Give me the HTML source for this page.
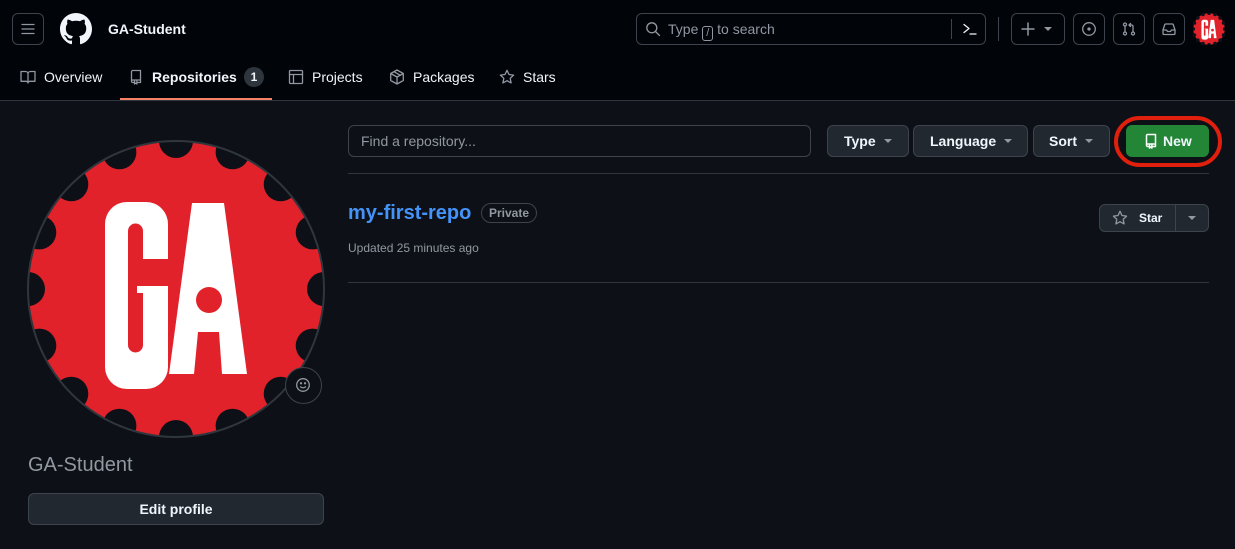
<!DOCTYPE html>
<html><head><meta charset="utf-8"><style>
*{box-sizing:border-box;margin:0;padding:0}
body{width:1235px;height:549px;overflow:hidden;background:#0d1117;font-family:"Liberation Sans",sans-serif;color:#f0f6fc;position:relative}
.abs{position:absolute}
.hdr{left:0;top:0;width:1235px;height:101px;background:#010409;border-bottom:1px solid #30363d}
.btn{position:absolute;border:1px solid #3d444d;border-radius:6px}
.ic{position:absolute;fill:none;stroke:#9198a1;stroke-width:1.3;stroke-linecap:round;stroke-linejoin:round}
.tab{position:absolute;top:68px;font-size:14px;color:#f0f6fc;line-height:18px}
.gbtn{position:absolute;top:125px;height:32px;background:#212830;border:1px solid #3d444d;border-radius:6px;font-size:14px;font-weight:bold;color:#f0f6fc;line-height:30px}
.caret{display:inline-block;width:0;height:0;border-left:4px solid transparent;border-right:4px solid transparent;border-top:4px solid #9198a1;vertical-align:middle;margin-left:8px;margin-top:-2px}
</style></head><body>
<div class="abs hdr"></div>
<div class="btn" style="left:12px;top:13px;width:32px;height:32px"></div>
<svg class="ic" style="left:20px;top:21px" width="16" height="16" viewBox="0 0 16 16"><path d="M2 3.5h12M2 8h12M2 12.5h12"/></svg>
<svg class="abs" style="left:60px;top:13px" width="32" height="32" viewBox="0 0 16 16"><path fill="#f0f6fc" d="M8 0C3.58 0 0 3.58 0 8c0 3.54 2.29 6.53 5.47 7.59.4.07.55-.17.55-.38 0-.19-.01-.82-.01-1.49-2.01.37-2.53-.49-2.69-.94-.09-.23-.48-.94-.82-1.13-.28-.15-.68-.52-.01-.53.63-.01 1.08.58 1.23.82.72 1.21 1.87.87 2.33.66.07-.52.28-.87.51-1.07-1.78-.2-3.64-.89-3.64-3.95 0-.87.31-1.59.82-2.15-.08-.2-.36-1.02.08-2.12 0 0 .67-.21 2.2.82.64-.18 1.32-.27 2-.27.68 0 1.36.09 2 .27 1.53-1.04 2.2-.82 2.2-.82.44 1.1.16 1.92.08 2.12.51.56.82 1.27.82 2.15 0 3.07-1.87 3.75-3.65 3.95.29.25.54.73.54 1.48 0 1.07-.01 1.93-.01 2.2 0 .21.15.46.55.38A8.013 8.013 0 0016 8c0-4.42-3.58-8-8-8z"/></svg>
<div class="abs" style="left:108px;top:20px;font-size:14px;font-weight:bold;line-height:18px">GA-Student</div>
<div class="btn" style="left:636px;top:13px;width:350px;height:32px"></div>
<svg class="ic" style="left:645px;top:21px" width="16" height="16" viewBox="0 0 16 16"><circle cx="6.8" cy="6.8" r="5"/><path d="M10.5 10.5l4 4"/></svg>
<div class="abs" style="left:668px;top:20px;font-size:14px;color:#9198a1;line-height:18px">Type <span style="display:inline-block;border:1px solid #9198a1;border-radius:3px;width:11px;height:15px;font-size:11px;line-height:13px;text-align:center;vertical-align:-2px">/</span> to search</div>
<div class="abs" style="left:951px;top:19px;width:1px;height:20px;background:#3d444d"></div>
<svg class="ic" style="left:962px;top:21px;stroke:#f0f6fc" width="16" height="16" viewBox="0 0 16 16"><path d="M2 3.5l5 4-5 4M8 13h6"/></svg>
<div class="abs" style="left:998px;top:17px;width:1px;height:24px;background:#3d444d"></div>
<div class="btn" style="left:1011px;top:13px;width:54px;height:32px"></div>
<svg class="ic" style="left:1020px;top:21px;stroke:#9198a1;stroke-width:1.5" width="16" height="16" viewBox="0 0 16 16"><path d="M8 2v12M2 8h12"/></svg>
<div class="abs" style="left:1044px;top:27px;border-left:4px solid transparent;border-right:4px solid transparent;border-top:4px solid #9198a1"></div>
<div class="btn" style="left:1073px;top:13px;width:32px;height:32px"></div>
<svg class="ic" style="left:1081px;top:21px" width="16" height="16" viewBox="0 0 16 16"><circle cx="8" cy="8" r="6.3"/><circle cx="8" cy="8" r="1" fill="#9198a1"/></svg>
<div class="btn" style="left:1113px;top:13px;width:32px;height:32px"></div>
<svg class="ic" style="left:1121px;top:21px" width="16" height="16" viewBox="0 0 16 16"><circle cx="4" cy="3.5" r="1.5"/><circle cx="4" cy="12.5" r="1.5"/><circle cx="12" cy="12.5" r="1.5"/><path d="M4 5v6M12 11V5.5c0-1-.5-1.5-1.5-1.5H8M9.5 2.5L8 4l1.5 1.5"/></svg>
<div class="btn" style="left:1153px;top:13px;width:32px;height:32px"></div>
<svg class="ic" style="left:1161px;top:21px" width="16" height="16" viewBox="0 0 16 16"><path d="M2 9l1.8-5.5c.1-.3.4-.5.7-.5h7c.3 0 .6.2.7.5L14 9v3.5c0 .5-.4 1-1 1H3c-.6 0-1-.5-1-1z"/><path d="M2 9h3.5l1 1.5h3l1-1.5H14"/></svg>
<svg class="abs" style="left:1193px;top:13px" width="32" height="32" viewBox="-150 -150 300 300"><use href="#ga"/></svg>

<!-- tabs -->
<svg class="ic" style="left:20px;top:69px" width="16" height="16" viewBox="0 0 16 16"><path d="M1 2.5h4.5c1.3 0 2.5 1 2.5 2.3V14c0-1-1-1.7-2-1.7H1zM15 2.5h-4.5C9.2 2.5 8 3.5 8 4.8V14c0-1 1-1.7 2-1.7h5z"/></svg>
<div class="tab" style="left:44px">Overview</div>
<svg class="ic" style="left:128px;top:69px" width="16" height="16" viewBox="0 0 16 16"><path d="M3.5 12V2.8c0-.7.5-1.3 1.2-1.3h7.8v9.5H4.8c-.7 0-1.3.5-1.3 1.2s.6 1.3 1.3 1.3H6M9 13.5h3.5v-2.5M6.5 12v3l1.2-1 1.2 1v-3"/></svg>
<div class="tab" style="left:152px;font-weight:bold">Repositories</div>
<div class="abs" style="left:244px;top:67px;width:20px;height:20px;border-radius:10px;background:#2f353d;font-size:12px;font-weight:bold;text-align:center;line-height:20px">1</div>
<div class="abs" style="left:120px;top:98px;width:152px;height:2px;background:#f78166"></div>
<svg class="ic" style="left:288px;top:69px" width="16" height="16" viewBox="0 0 16 16"><rect x="1.5" y="1.5" width="13" height="13" rx="1"/><path d="M1.5 5.5h13M5.5 5.5v9"/></svg>
<div class="tab" style="left:312px">Projects</div>
<svg class="ic" style="left:389px;top:69px" width="16" height="16" viewBox="0 0 16 16"><path d="M8 1l6.3 3.5v7L8 15 1.7 11.5v-7zM1.7 4.5L8 8l6.3-3.5M8 8v7M5 2.7l6.3 3.6"/></svg>
<div class="tab" style="left:413px">Packages</div>
<svg class="ic" style="left:499px;top:69px" width="16" height="16" viewBox="0 0 16 16"><path d="M8 1.3l2 4.2 4.6.6-3.4 3.2.9 4.6L8 11.7l-4.1 2.2.9-4.6L1.4 6.1 6 5.5z"/></svg>
<div class="tab" style="left:523px">Stars</div>

<!-- avatar -->
<svg class="abs" style="left:26px;top:139px" width="300" height="300" viewBox="-150 -150 300 300">
<defs><g id="ga">
<circle r="148" fill="#e2222b"/>
<g fill="#0d1117">
<circle cx="0" cy="-148" r="17"/><circle cx="56.6" cy="-136.7" r="17"/><circle cx="104.7" cy="-104.7" r="17"/><circle cx="136.7" cy="-56.6" r="17"/>
<circle cx="148" cy="0" r="17"/><circle cx="136.7" cy="56.6" r="17"/><circle cx="104.7" cy="104.7" r="17"/><circle cx="56.6" cy="136.7" r="17"/>
<circle cx="0" cy="148" r="17"/><circle cx="-56.6" cy="136.7" r="17"/><circle cx="-104.7" cy="104.7" r="17"/><circle cx="-136.7" cy="56.6" r="17"/>
<circle cx="-148" cy="0" r="17"/><circle cx="-136.7" cy="-56.6" r="17"/><circle cx="-104.7" cy="-104.7" r="17"/><circle cx="-56.6" cy="-136.7" r="17"/>
</g>
<path fill="#fff" d="M-49 -87h19a22 22 0 0 1 22 22v35h-25v-28a7 7 0 0 0-15 0v114a7 7 0 0 0 15 0v-52h-6v-7h31v81a22 22 0 0 1-22 22h-19a22 22 0 0 1-22-22v-143a22 22 0 0 1 22-22z"/>
<path fill="#fff" d="M16 -86h32l23 171h-25l-3-42h-21l-4 42h-25z"/>
<circle cx="33" cy="11" r="13" fill="#e2222b"/>
</g></defs>
<use href="#ga"/>
<circle r="148" fill="none" stroke="#30363d" stroke-width="2"/>
</svg>
<div class="abs" style="left:285px;top:367px;width:37px;height:37px;border-radius:50%;background:#0d1117;border:1px solid #3d444d"></div>
<svg class="ic" style="left:295px;top:377px" width="16" height="16" viewBox="0 0 16 16"><circle cx="8" cy="8" r="6.3"/><path d="M5.5 9.8c1.3 1.3 3.7 1.3 5 0"/><circle cx="6" cy="6.3" r=".5" fill="#9198a1"/><circle cx="10" cy="6.3" r=".5" fill="#9198a1"/></svg>
<div class="abs" style="left:28px;top:453px;font-size:20px;color:#9198a1;line-height:24px">GA-Student</div>
<div class="abs" style="left:28px;top:493px;width:296px;height:32px;background:#212830;border:1px solid #3d444d;border-radius:6px;font-size:14px;font-weight:bold;text-align:center;line-height:30px">Edit profile</div>

<!-- right -->
<div class="abs" style="left:348px;top:125px;width:463px;height:32px;border:1px solid #3d444d;border-radius:6px;background:#0d1117;font-size:14px;color:#9198a1;line-height:30px;padding-left:12px">Find a repository...</div>
<div class="gbtn" style="left:827px;width:82px;padding-left:16px">Type<span class="caret"></span></div>
<div class="gbtn" style="left:913px;width:115px;padding-left:16px">Language<span class="caret"></span></div>
<div class="gbtn" style="left:1033px;width:77px;padding-left:15px">Sort<span class="caret"></span></div>
<div class="abs" style="left:1126px;top:125px;width:83px;height:32px;background:#238636;border-radius:6px;font-size:14px;font-weight:bold;line-height:32px;padding-left:37px">New</div>
<svg class="ic" style="left:1143px;top:133px;stroke:#fff;stroke-width:1.5" width="16" height="16" viewBox="0 0 16 16"><path d="M3.5 12V2.8c0-.7.5-1.3 1.2-1.3h7.8v9.5H4.8c-.7 0-1.3.5-1.3 1.2s.6 1.3 1.3 1.3H6M9 13.5h3.5v-2.5M6.5 12v3l1.2-1 1.2 1v-3"/></svg>
<div class="abs" style="left:1114px;top:116px;width:108px;height:51px;border:4px solid #e0200c;border-radius:26px"></div>
<div class="abs" style="left:348px;top:173px;width:861px;height:1px;background:#30363d"></div>
<div class="abs" style="left:348px;top:201px;font-size:20px;font-weight:bold;color:#4493f8;line-height:24px">my-first-repo</div>
<div class="abs" style="left:481px;top:203px;width:56px;height:20px;border:1px solid #3d444d;border-radius:10px;font-size:12px;font-weight:bold;color:#9198a1;text-align:center;line-height:18px">Private</div>
<div class="abs" style="left:348px;top:241px;font-size:12px;color:#9198a1;line-height:14px">Updated 25 minutes ago</div>
<div class="abs" style="left:1099px;top:204px;width:110px;height:28px;background:#212830;border:1px solid #3d444d;border-radius:6px"></div>
<div class="abs" style="left:1175px;top:205px;width:1px;height:26px;background:#3d444d"></div>
<svg class="ic" style="left:1112px;top:210px" width="16" height="16" viewBox="0 0 16 16"><path d="M8 1.3l2 4.2 4.6.6-3.4 3.2.9 4.6L8 11.7l-4.1 2.2.9-4.6L1.4 6.1 6 5.5z"/></svg>
<div class="abs" style="left:1139px;top:211px;font-size:12px;font-weight:bold;line-height:14px">Star</div>
<div class="abs" style="left:1188px;top:216px;border-left:4px solid transparent;border-right:4px solid transparent;border-top:4px solid #9198a1"></div>
<div class="abs" style="left:348px;top:282px;width:861px;height:1px;background:#30363d"></div>
</body></html>
